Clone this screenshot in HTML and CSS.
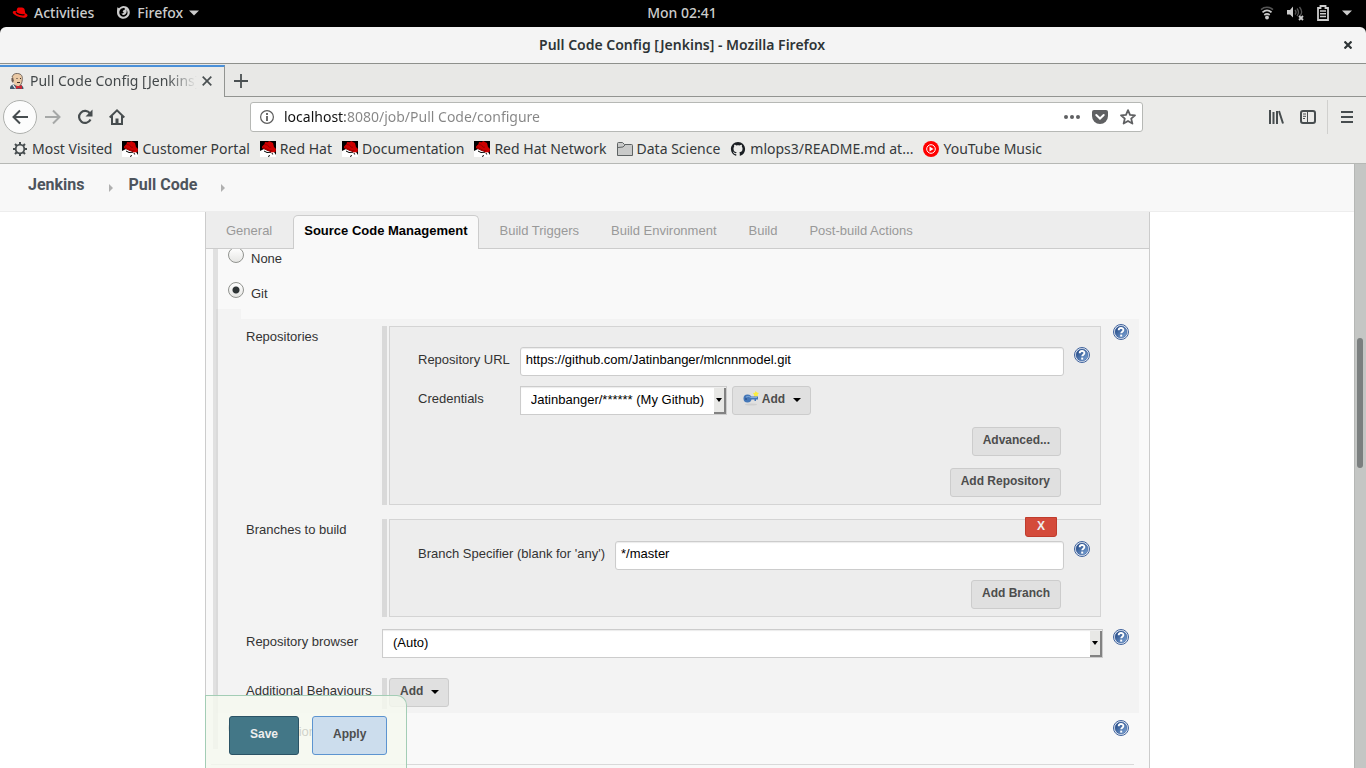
FILE: index.html
```html
<!DOCTYPE html>
<html lang="en">
<head>
<meta charset="utf-8">
<title>Pull Code Config [Jenkins]</title>
<link rel="stylesheet" href="styles.css">
</head>
<body>
<svg width="0" height="0" class="defs" aria-hidden="true">
  <defs>
    <linearGradient id="helpFill" x1="0" y1="0" x2="1" y2="1"><stop offset="0" stop-color="#163c7a"/><stop offset="1" stop-color="#83abdc"/></linearGradient>
    <symbol id="help" viewBox="0 0 16 16"><circle cx="8" cy="8" r="7.5" fill="#f2f5fa" stroke="#3f629c"/><circle cx="8" cy="8" r="6" fill="url(#helpFill)" stroke="#274f8f" stroke-width=".5"/><path d="M5.7 6.3C5.6 3.4 10.4 3.3 10.4 6c0 1.6-2.2 1.7-2.2 3.3" fill="none" stroke="#fff" stroke-width="1.9"/><rect x="7.2" y="10.6" width="2" height="2" fill="#fff"/></symbol>
    <symbol id="shadowman" viewBox="0 0 16 16"><rect width="16" height="16" fill="#fff"/><path d="M0 0h16v14l-2-3-2-2-4 1-4-2-4 2z" fill="#000"/><path d="M2 5.5 4.5 3 5 1l3 .2L9 0l4 2 1 4 2 2-.5 3-4 .5L6 9 2 7z" fill="#cf0000"/><path d="m4.500 3.500 3 .5 1.500 2.200h2M2.500 5.500l3 2 4 2 3 .3" fill="none" stroke="#8e0000" stroke-width=".8"/><path d="m4 10 3 1.500 4-.3M12 12l.7 1.500M8 15.500l2-1" stroke="#000" fill="none"/></symbol>
  </defs>
</svg>

<header class="desktop">
  <div class="desktop__left">
    <button class="desktop__item" type="button">
      <svg width="16" height="14" viewBox="0 0 16 14"><path d="M4.200 6 5.200 2.600C6 .5 8 1.800 9 1.600c2-.6 3.300.7 3.600 2l.7 3.700c3 1 2.700 3.300.4 4.100C10 12.600 2.700 9.700 1 7.200 0 5.600 2.300 4.600 3.800 5.300z" fill="#e00"/><path d="M4 6.200c1 2 5.600 3.300 8.500 2.400" fill="none" stroke="#000" stroke-width="1.300"/></svg>
      <span>Activities</span>
    </button>
    <button class="desktop__item" type="button">
      <svg width="15" height="15" viewBox="0 0 15 15"><path d="M1.400 2.200 3 3.300C4.200 2 5.700 1 7.600 1c3.500 0 6.200 2.800 6.200 6.300s-2.700 6.500-6.300 6.500S1 11 1 7.500c0-2 .1-3.300.4-5.300z" fill="#ccc"/><path d="M8 2.800c1.500 1 1.300 2-.3 2.300L6.600 6.400l1.200 1-1 1.200-1.300-.4c.4 1.700 2.200 2.200 3.600 1.300 1.800-1.200 2-3.500 1-5.200 2 2 2 5-.1 6.500-2.800 1.900-6 .4-6.600-2.300-.4-2 .4-3.700 1.600-4.700z" fill="#000"/></svg>
      <span>Firefox</span>
      <svg width="10" height="6" viewBox="0 0 10 6"><path d="M0 .5h10l-5 5z" fill="#ccc"/></svg>
    </button>
  </div>
  <time class="desktop__clock">Mon 02:41</time>
  <button class="desktop__status" type="button" aria-label="System menu">
    <svg width="14" height="14" viewBox="0 0 14 14" fill="none"><path d="M1 3.600c3.500-3 8.500-3 12 0" stroke="#555" stroke-width="1.500"/><path d="M2.500 6.300c2.700-2.300 6.300-2.300 9 0M4.300 9c1.600-1.400 3.800-1.400 5.400 0" stroke="#ccc" stroke-width="1.700"/><circle cx="7" cy="11.500" r="1.900" fill="#ccc"/></svg>
    <svg width="17" height="16" viewBox="0 0 17 16"><path d="M0 5h3l3-3.500v11L3 9.500H0z" fill="#ccc"/><path d="M8 5q2 2.200 0 4.500M10 3.500q3 3.700 0 7.500M12.500 2q4 5 .5 9" fill="none" stroke="#555" stroke-width="1.300"/><path d="m12 11 4 4m0-4-4 4" stroke="#ccc" stroke-width="1.800"/></svg>
    <svg width="12" height="16" viewBox="0 0 12 16"><path d="M1 3h2.500V1h5v2H11v12H1z" fill="none" stroke="#ccc" stroke-width="1.800"/><path d="M3 6h6M3 8.700h6M3 11.500h6" stroke="#ccc" stroke-width="1.500"/></svg>
    <svg width="10" height="6" viewBox="0 0 10 6"><path d="M0 .5h10l-5 5z" fill="#ccc"/></svg>
  </button>
</header>

<div class="titlebar-back">
  <div class="titlebar">
    <span class="titlebar__text">Pull Code Config [Jenkins] - Mozilla Firefox</span>
    <button class="icon-button" type="button" aria-label="Close window"><svg width="8" height="8" viewBox="0 0 8 8"><path d="m.5.5 7 7m0-7-7 7" stroke="#2e3436" stroke-width="2.200"/></svg></button>
  </div>
</div>

<div class="tabstrip">
  <div class="browser-tab">
    <svg class="browser-tab__icon" width="16" height="16" viewBox="0 0 16 16"><path d="M1 16c-.3-2.500 1-4 3.500-4.500l6 .3c3 .5 4 2 4 4.200H1z" fill="#42586c"/><path d="M3 4C4 1.200 6 .5 8.500.6c3 .1 4.700 2.200 4.800 5 0 4-1.300 7.600-4.500 7.600-2.300 0-3.500-2-4.500-4C2.500 8 2 6.500 3 4z" fill="#eac9a5"/><path d="M3 4C4 1.200 6 .3 8.500.5c4 .2 5.200 3 4.800 6-.1 2.500-.9 4.500-2 5.700" fill="none" stroke="#574a42" stroke-width=".8"/><path d="M2.500 5.500 4 4l.8 3.500-.8 2.500-1.500-2z" fill="#6a5b52"/><path d="M7.500 5.500h1m2.500 0h1M8 9.500h3" stroke="#392e29"/><path d="m7 12.500 2 .7 4-1v4l-3.500-1.200L7 16z" fill="#ce2936"/><path d="m4 12 2.500 3.500" stroke="#fff" stroke-width="1.200"/></svg>
    <span class="browser-tab__title">Pull Code Config [Jenkins]</span>
    <button class="icon-button" type="button" aria-label="Close tab"><svg width="10" height="10" viewBox="0 0 10 10"><path d="m.7.7 8.600 8.600m0-8.600L.7 9.300" stroke="#4a5052" stroke-width="1.700"/></svg></button>
  </div>
  <div class="tabstrip__rest">
    <button class="icon-button" type="button" aria-label="New tab"><svg width="14" height="14" viewBox="0 0 14 14"><path d="M7 0v14M0 7h14" stroke="#4a5052" stroke-width="1.800"/></svg></button>
  </div>
</div>

<nav class="toolbar" aria-label="Navigation">
  <div class="toolbar__group">
    <button class="icon-button back" type="button" aria-label="Back"><svg width="16" height="16" viewBox="0 0 16 16"><path d="M16 8H2M8 1.500 1.500 8 8 14.500" fill="none" stroke="#474d4f" stroke-width="2"/></svg></button>
    <button class="icon-button" type="button" aria-label="Forward"><svg width="16" height="16" viewBox="0 0 16 16"><path d="M0 8h14M8 1.500 14.500 8 8 14.500" fill="none" stroke="#a6a8a7" stroke-width="2"/></svg></button>
    <button class="icon-button" type="button" aria-label="Reload"><svg width="16" height="16" viewBox="0 0 16 16"><path d="M13 4.500A6 6 0 1 0 13.500 10.500" fill="none" stroke="#474d4f" stroke-width="2.200"/><path d="M15.500.5v7h-7z" fill="#474d4f"/></svg></button>
    <button class="icon-button" type="button" aria-label="Home"><svg width="16" height="16" viewBox="0 0 16 16"><path d="M.7 8.500 8 1.400l7.300 7.100" fill="none" stroke="#474d4f" stroke-width="2"/><path d="M3 7v8h10V7" fill="none" stroke="#474d4f" stroke-width="2"/><path d="M6.500 15V9.500h3V15z" fill="#474d4f"/></svg></button>
  </div>
  <div class="urlbar">
    <svg width="14" height="14" viewBox="0 0 14 14"><circle cx="7" cy="7" r="6.400" fill="none" stroke="#5c5c5c" stroke-width="1.200"/><path d="M7 6v5M7 3v2" stroke="#5c5c5c" stroke-width="1.800"/></svg>
    <input class="urlbar__input" type="text" aria-label="Address" value="localhost:8080/job/Pull Code/configure">
    <button class="icon-button" type="button" aria-label="Page actions"><svg width="16" height="4" viewBox="0 0 16 4" fill="#5f6062"><circle cx="2" cy="2" r="2"/><circle cx="8" cy="2" r="2"/><circle cx="14" cy="2" r="2"/></svg></button>
    <button class="icon-button" type="button" aria-label="Save to Pocket"><svg width="16" height="16" viewBox="0 0 16 16"><path d="M2 1h12q2 0 2 2v4a8 8 0 0 1-16 0V3q0-2 2-2z" fill="#5f6062"/><path d="m4.300 6 3.700 3.500L11.700 6" fill="none" stroke="#fff" stroke-width="2" stroke-linecap="round"/></svg></button>
    <button class="icon-button" type="button" aria-label="Bookmark"><svg width="16" height="16" viewBox="0 0 16 16"><path d="m8 1.200 2 4.600 5 .5-3.800 3.300 1.200 5L8 12l-4.400 2.600 1.200-5L1 6.300l5-.5z" fill="none" stroke="#5f6062" stroke-width="1.800" stroke-linejoin="round"/></svg></button>
  </div>
  <div class="toolbar__group toolbar__group--end">
    <button class="icon-button" type="button" aria-label="Library"><svg width="16" height="14" viewBox="0 0 16 14"><path d="M2 0v14M5.500 2v12M9 1v13M11 1l4 12.500" stroke="#474d4f" stroke-width="2" fill="none"/></svg></button>
    <button class="icon-button" type="button" aria-label="Sidebars"><svg width="16" height="14" viewBox="0 0 16 14"><rect x="1" y="1" width="14" height="12" rx="2" fill="none" stroke="#474d4f" stroke-width="2"/><path d="M7.500 1v12M3 4h3M3 6.300h3M3 8.500h2" stroke="#474d4f"/></svg></button>
    <div class="toolbar__menu">
      <button class="icon-button" type="button" aria-label="Menu"><svg width="12" height="12" viewBox="0 0 12 12"><path d="M0 1h12M0 6h12M0 11h12" stroke="#474d4f" stroke-width="2"/></svg></button>
    </div>
  </div>
</nav>

<nav class="bookmarks" aria-label="Bookmarks">
  <a class="bookmark" href="#"><svg width="16" height="16" viewBox="0 0 16 16"><circle cx="8" cy="8" r="4.300" fill="none" stroke="#474d4f" stroke-width="1.800"/><path d="M8 1v3M8 12v3M1 8h3M12 8h3M3 3l2 2M11 11l2 2M13 3l-2 2M5 11l-2 2" stroke="#474d4f" stroke-width="2"/></svg>Most Visited</a>
  <a class="bookmark" href="#"><svg width="16" height="16"><use href="#shadowman"/></svg>Customer Portal</a>
  <a class="bookmark" href="#"><svg width="16" height="16"><use href="#shadowman"/></svg>Red Hat</a>
  <a class="bookmark" href="#"><svg width="16" height="16"><use href="#shadowman"/></svg>Documentation</a>
  <a class="bookmark" href="#"><svg width="16" height="16"><use href="#shadowman"/></svg>Red Hat Network</a>
  <a class="bookmark" href="#"><svg width="16" height="16" viewBox="0 0 16 16"><path d="M.5 14.500v-12q0-1 1-1h4l2 2h7q1 0 1 1v10z" fill="#c9cac9" stroke="#5e6363"/><path d="M1 6.500 6 6l2-2" fill="none" stroke="#5e6363"/></svg>Data Science</a>
  <a class="bookmark" href="#"><svg width="16" height="16" viewBox="-1 -1 18 18"><path fill="#1b1f23" d="M8 0C3.580 0 0 3.580 0 8c0 3.540 2.290 6.530 5.470 7.590.4.070.55-.17.55-.38 0-.19-.01-.82-.01-1.490-2.010.37-2.530-.49-2.690-.94-.09-.23-.48-.94-.82-1.130-.28-.15-.68-.52-.01-.53.63-.01 1.080.58 1.230.82.720 1.210 1.870.87 2.330.66.070-.52.280-.87.510-1.070-1.780-.2-3.640-.89-3.640-3.950 0-.87.310-1.590.82-2.150-.08-.2-.36-1.020.08-2.120 0 0 .67-.21 2.200.82.640-.18 1.320-.27 2-.27s1.360.09 2 .27c1.530-1.040 2.200-.82 2.200-.82.440 1.100.160 1.920.080 2.120.510.560.820 1.270.820 2.150 0 3.070-1.870 3.750-3.650 3.950.290.250.540.730.540 1.480 0 1.070-.010 1.930-.010 2.200 0 .210.150.460.550.380A8.010 8.010 0 0 0 16 8c0-4.420-3.580-8-8-8z"/></svg>mlops3/README.md at...</a>
  <a class="bookmark" href="#"><svg width="16" height="16" viewBox="0 0 16 16"><circle cx="8" cy="8" r="8" fill="#f00"/><circle cx="8" cy="8" r="4.300" fill="none" stroke="#fff"/><path d="m6.500 5.500 4 2.500-4 2.500z" fill="#fff"/></svg>YouTube Music</a>
</nav>

<div class="viewport">
  <main class="page">
    <nav class="breadcrumb" aria-label="Breadcrumb">
      <a href="#">Jenkins</a><i class="crumb-arrow"></i>
      <a href="#">Pull Code</a><i class="crumb-arrow"></i>
    </nav>
    <div class="page__body">
      <form class="config">
        <div class="config-tabs">
          <a class="config-tab" href="#">General</a>
          <a class="config-tab config-tab--active" href="#">Source Code Management</a>
          <a class="config-tab" href="#">Build Triggers</a>
          <a class="config-tab" href="#">Build Environment</a>
          <a class="config-tab" href="#">Build</a>
          <a class="config-tab" href="#">Post-build Actions</a>
        </div>
        <div class="config__content">
          <section class="scm">
            <div class="choice choice--none"><input type="radio" name="scm" id="scm-none"><label for="scm-none">None</label></div>
            <div class="choice choice--git"><input type="radio" name="scm" id="scm-git" checked><label for="scm-git">Git</label></div>
            <div class="nested">
              <div class="nested__gutter"></div>
              <div class="nested__body">
                <div class="setting">
                  <span class="setting__label">Repositories</span>
                  <div class="repeat">
                    <div class="repeat__bar"></div>
                    <div class="box">
                      <div class="fields">
                        <label for="repo-url">Repository URL</label>
                        <input class="text-input" type="text" id="repo-url" value="https://github.com/Jatinbanger/mlcnnmodel.git">
                        <button class="help" type="button" aria-label="Help"><svg width="16" height="16"><use href="#help"/></svg></button>
                        <label for="credentials">Credentials</label>
                        <div class="inline">
                          <div class="select"><select id="credentials"><option>Jatinbanger/****** (My Github)</option></select><span class="select__arrow"></span></div>
                          <button class="button" type="button"><svg width="16" height="16" viewBox="0 0 16 16"><ellipse cx="8" cy="13.500" rx="6" ry="1" fill="#cfcfcf"/><path d="M12.500 0 14 1.500l2 .5-1.500 1.500.5 2-2-.5-2 1 .2-2L10 2l2-.3z" fill="#fbee3c"/><circle cx="4.500" cy="7.500" r="4" fill="#4477b8"/><path d="M7 5.500h8v3h-2v1.500h-1.500V8.500H7z" fill="#4477b8"/><path d="M3 6q3-1.500 5 .5h6" stroke="#84abd9" fill="none"/><circle cx="3" cy="8" r="1" fill="#2e5590"/></svg>Add<i class="caret"></i></button>
                        </div>
                      </div>
                      <div class="actions"><button class="button" type="button">Advanced...</button></div>
                      <div class="actions"><button class="button" type="button">Add Repository</button></div>
                    </div>
                  </div>
                  <button class="help" type="button" aria-label="Help"><svg width="16" height="16"><use href="#help"/></svg></button>
                </div>
                <div class="setting">
                  <span class="setting__label">Branches to build</span>
                  <div class="repeat">
                    <div class="repeat__bar"></div>
                    <div class="box box--tight">
                      <button class="delete" type="button">X</button>
                      <div class="fields">
                        <label for="branch">Branch Specifier (blank for 'any')</label>
                        <input class="text-input" type="text" id="branch" value="*/master">
                        <button class="help" type="button" aria-label="Help"><svg width="16" height="16"><use href="#help"/></svg></button>
                      </div>
                      <div class="actions"><button class="button" type="button">Add Branch</button></div>
                    </div>
                  </div>
                </div>
                <div class="setting setting--browser">
                  <label class="setting__label" for="browser">Repository browser</label>
                  <div class="select"><select id="browser"><option>(Auto)</option></select><span class="select__arrow"></span></div>
                  <button class="help" type="button" aria-label="Help"><svg width="16" height="16"><use href="#help"/></svg></button>
                </div>
                <div class="setting">
                  <span class="setting__label">Additional Behaviours</span>
                  <div class="repeat repeat--plain">
                    <div class="repeat__bar"></div>
                    <button class="button" type="button">Add<i class="caret"></i></button>
                  </div>
                </div>
              </div>
            </div>
            <div class="choice choice--svn"><input type="radio" name="scm" id="scm-svn"><label for="scm-svn">Subversion</label><button class="help" type="button" aria-label="Help"><svg width="16" height="16"><use href="#help"/></svg></button></div>
          </section>
          <hr class="divider">
        </div>
        <div class="save-bar">
          <button class="save-bar__button save-bar__button--primary" type="button">Save</button>
          <button class="save-bar__button" type="button">Apply</button>
        </div>
      </form>
    </div>
  </main>
  <div class="scrollbar"><div class="scrollbar__thumb"></div></div>
</div>
</body>
</html>
```
FILE: styles.css
```css
* { box-sizing: border-box; }

body {
  margin: 0;
  height: 100vh;
  display: flex;
  flex-direction: column;
  overflow: hidden;
  background: #fff;
  color: #333;
  font: 13px/16px "Liberation Sans", Arial, sans-serif;
}

button, input, select { font: inherit; color: inherit; margin: 0; }
a { color: inherit; text-decoration: none; }
svg { display: block; flex: none; }
.defs { position: absolute; }

.icon-button, .help {
  display: flex;
  align-items: center;
  justify-content: center;
  padding: 0;
  border: 0;
  background: none;
}

/* Desktop bar */
.desktop, .titlebar, .browser-tab, .urlbar, .bookmarks {
  font-family: "Noto Sans", "Open Sans", sans-serif;
  font-size: 14px;
  line-height: 20px;
}

.desktop {
  flex: none;
  height: 27px;
  display: grid;
  grid-template-columns: 1fr auto 1fr;
  align-items: center;
  padding: 0 14px 2px 12px;
  background: #000;
  color: #ccc;
  font-weight: 500;
}
.desktop__left { display: flex; gap: 22px; }
.desktop__item, .desktop__status {
  display: flex;
  align-items: center;
  padding: 0;
  border: 0;
  background: none;
}
.desktop__item { gap: 6px; }
.desktop__status { justify-self: end; gap: 13px; }

/* Window title */
.titlebar-back { flex: none; background: #000; }
.titlebar {
  height: 37px;
  display: flex;
  align-items: center;
  padding: 0 14px 0 20px;
  border-bottom: 1px solid #8e908c;
  border-radius: 6px 6px 0 0;
  background: #f4f4f4;
  color: #2e3436;
  font-weight: 600;
}
.titlebar__text { flex: 1; text-align: center; }

/* Tabs */
.tabstrip { flex: none; height: 33px; display: flex; padding-top: 1px; background: #e8e8e6; }
.browser-tab {
  width: 225px;
  display: flex;
  align-items: center;
  gap: 5px;
  padding: 0 12px 2px 9px;
  border-top: 2px solid #4a90d9;
  border-right: 1px solid #929491;
  background: #ebebe9;
  color: #43484a;
}
.browser-tab__title {
  flex: 1;
  min-width: 0;
  overflow: hidden;
  white-space: nowrap;
  -webkit-mask-image: linear-gradient(to left, transparent, #000 30px);
  mask-image: linear-gradient(to left, transparent, #000 30px);
}
.tabstrip__rest {
  flex: 1;
  display: flex;
  align-items: center;
  padding-left: 9px;
  border-bottom: 1px solid #929491;
}

/* Toolbar */
.toolbar {
  flex: none;
  height: 40px;
  display: flex;
  align-items: center;
  padding: 0 13px 0 3px;
  background: #ebebe9;
}
.toolbar__group { display: flex; align-items: center; gap: 16px; width: 247px; }
.toolbar__group--end { width: 210px; justify-content: flex-end; }
.toolbar__menu {
  display: flex;
  align-items: center;
  height: 34px;
  margin-left: -5px;
  padding-left: 13px;
  border-left: 1px solid #d0d0ce;
}
.back {
  width: 34px;
  height: 34px;
  margin-right: -8px;
  border: 1px solid #aeb0ad;
  border-radius: 50%;
  background: #fcfcfc;
}
.urlbar {
  flex: 1;
  height: 30px;
  display: flex;
  align-items: center;
  gap: 12px;
  padding: 0 6px 0 9px;
  border: 1px solid #b6b8b5;
  border-radius: 3px;
  background: #fff;
}
.urlbar__input {
  flex: 1;
  min-width: 0;
  margin-left: -2px;
  padding: 0;
  border: 0;
  outline: 0;
  background: linear-gradient(to right, #111 61px, #858585 61px);
  -webkit-background-clip: text;
  background-clip: text;
  color: transparent;
}

.bookmarks {
  flex: none;
  height: 27px;
  display: flex;
  gap: 10px;
  padding: 2px 12px 4px;
  border-bottom: 1px solid #b6b8b5;
  background: #ebebe9;
  color: #35393b;
  white-space: nowrap;
}
.bookmark { display: flex; align-items: center; gap: 4px; }

/* Page */
.viewport { flex: 1; min-height: 0; display: flex; }
.page { flex: 1; min-width: 0; display: flex; flex-direction: column; }
.scrollbar {
  width: 12px;
  padding: 174px 2px 0;
  border-left: 1px solid #b5b7b5;
  background: #c4c6c4;
}
.scrollbar__thumb { width: 6px; height: 130px; border-radius: 3px; background: #7b7f7f; }

.breadcrumb {
  flex: none;
  height: 48px;
  display: flex;
  align-items: center;
  padding: 0 28px 5px;
  border-bottom: 1px solid #ededed;
  background: #f8f8f8;
  color: #4d545d;
  font: bold 16px/20px Roboto, sans-serif;
}
.crumb-arrow {
  margin: 5px 16px 0 24px;
  border: 4px solid transparent;
  border-right-width: 0;
  border-left-color: #b0b0b0;
}

.page__body { flex: 1; min-height: 0; padding: 0 204px 0 205px; }
.config {
  position: relative;
  height: 100%;
  display: flex;
  flex-direction: column;
  border: solid #ccc;
  border-width: 0 1px;
  background: #f9f9f9;
}
.config-tabs {
  flex: none;
  height: 37px;
  display: flex;
  align-items: flex-end;
  gap: 10px;
  padding-left: 9px;
  border-bottom: 1px solid #ccc;
  background: #ededed;
  color: #999;
}
.config-tab {
  height: 34px;
  margin-bottom: -1px;
  padding: 7px 10px;
  border: 1px solid transparent;
  border-bottom: 0;
  border-radius: 5px 5px 0 0;
}
.config-tab--active {
  border-color: #ccc;
  background: #f9f9f9;
  color: #000;
  font-weight: bold;
}

.config__content { flex: 1; min-height: 0; overflow: hidden; }
.scm { margin: -2px 10px 0 7px; border-left: 5px solid #e0e0e0; }
.choice { display: flex; align-items: flex-start; gap: 7px; padding: 0 10px; }
.choice--none { height: 35px; }
.choice--git { height: 27px; }
.choice--svn { height: 36px; padding-top: 7px; }
.choice label { flex: 1; padding-top: 4px; }
.choice input {
  appearance: none;
  width: 16px;
  height: 16px;
  border: 1px solid #91938f;
  border-radius: 50%;
  background: linear-gradient(#fff, #e6e6e4);
}
.choice input:checked {
  background: radial-gradient(circle, #2e3436 3px, transparent 4px), linear-gradient(#fff, #e6e6e4);
}

.nested { display: flex; margin-left: -2px; }
.nested__gutter { width: 25px; background: rgba(0, 0, 0, 0.025); }
.nested__body {
  flex: 1;
  min-width: 0;
  display: flex;
  flex-direction: column;
  gap: 12px;
  margin-top: 10px;
  padding: 5px 10px 4px 5px;
  background: #f3f3f3;
}
.setting {
  display: grid;
  grid-template-columns: 136px minmax(0, 1fr) 16px;
  align-items: start;
}
.setting > :nth-child(2) { margin-right: 10px; }
.setting--browser { padding-bottom: 8px; }
.setting__label { padding-top: 5px; }

.repeat { display: flex; align-items: stretch; gap: 2px; padding: 2px 2px 0 0; }
.repeat--plain { align-items: flex-start; padding: 0; }
.repeat__bar { width: 5px; background: #d9d9d9; }
.repeat--plain .repeat__bar { height: 31px; }
.box {
  position: relative;
  flex: 1;
  display: flex;
  flex-direction: column;
  gap: 12px;
  padding: 20px 10px 7px 28px;
  border: 1px solid #d4d4d4;
  background: #ededed;
}
.box--tight { gap: 10px; padding-top: 21px; }
.fields {
  display: grid;
  grid-template-columns: auto minmax(0, 1fr) 16px;
  gap: 10px;
  align-items: start;
}
.fields label { padding-top: 5px; white-space: nowrap; }
.inline { display: flex; gap: 5px; }
.actions { display: flex; justify-content: flex-end; padding-right: 29px; }

.text-input {
  width: 100%;
  height: 29px;
  padding: 0 5px 4px;
  border: 1px solid #ccc;
  border-radius: 3px;
  background: #fff;
  box-shadow: inset 0 1px 1px rgba(0, 0, 0, 0.08);
  color: #000;
}
.select {
  display: flex;
  height: 29px;
  border: 1px solid #ccc;
  background: #fff;
  box-shadow: inset 0 1px 1px rgba(0, 0, 0, 0.08);
  color: #000;
}
.select select {
  flex: 1;
  appearance: none;
  padding: 0 9px 2px 10px;
  border: 0;
  background: none;
}
.select__arrow {
  display: flex;
  align-items: center;
  justify-content: center;
  width: 12px;
  margin-top: 1px;
  border: solid #828282;
  border-width: 0 2px 2px 0;
  background: #e8e8e6;
}
.select__arrow::before, .caret {
  content: "";
  border: 3px solid transparent;
  border-top: 4px solid #000;
  border-bottom: 0;
}
.caret { margin: 2px -1px 0 8px; border-width: 4px 4px 0; }

.button {
  display: flex;
  align-items: center;
  height: 29px;
  padding: 0 10px 3px;
  border: 1px solid #ccc;
  border-radius: 3px;
  background: #e0e0e0;
  color: #4d4d4d;
  font-size: 12px;
  font-weight: bold;
}
.button svg { margin-right: 3px; }

.delete {
  position: absolute;
  top: -3px;
  right: 43px;
  width: 32px;
  height: 20px;
  padding: 0 0 4px;
  border: 1px solid #bf3c2d;
  border-radius: 0 0 3px 3px;
  background: #d44b3b;
  color: #eee;
  font-size: 12px;
  font-weight: bold;
}

.divider { margin: 15px 15px 0 5px; border: 0; border-top: 1px solid #d9d9d9; }

.save-bar {
  position: absolute;
  left: -1px;
  bottom: 0;
  display: flex;
  gap: 13px;
  padding: 20px 19px 13px 23px;
  border: 1px solid #a3cdb5;
  border-bottom: 0;
  border-radius: 0 10px 0 0;
  background: rgba(245, 249, 239, 0.8);
}
.save-bar__button {
  height: 39px;
  padding: 0 20px 3px;
  border: 1px solid #5c94d0;
  border-radius: 3px;
  background: #ccdded;
  color: #4d4d4d;
  font-size: 12px;
  font-weight: bold;
}
.save-bar__button--primary { border-color: #2b5365; background: #437787; color: #eee; }
```
